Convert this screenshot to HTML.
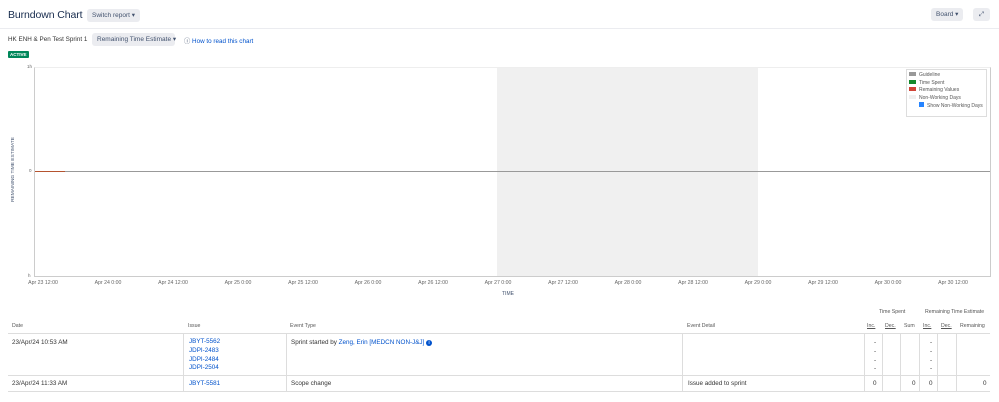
<!DOCTYPE html>
<html><head><meta charset="utf-8"><style>
*{box-sizing:border-box;margin:0;padding:0}
body{width:999px;height:402px;background:#fff;font-family:"Liberation Sans",sans-serif;color:#172b4d;position:relative;overflow:hidden}
.a{position:absolute;white-space:nowrap}
.btn{background:#ebecf0;border-radius:3px;font-size:6.5px;color:#42526e;padding:0 5px;height:13px;line-height:13px}
.lnk{color:#0052cc}
.s{font-size:6.3px;color:#333}
.x{font-size:5.2px;color:#666;transform:translateX(-50%)}
.h{font-size:5.2px;color:#555}
</style></head><body>
<div class="a" style="left:8px;top:9px;font-size:10.5px;color:#172b4d;letter-spacing:-0.1px">Burndown Chart</div>
<div class="a btn" style="left:87px;top:9px">Switch report ▾</div>
<div class="a btn" style="left:931px;top:8px">Board ▾</div>
<div class="a btn" style="left:973px;top:8px;width:17px;padding:0;text-align:center">⤢</div>
<div class="a" style="left:0;top:28px;width:999px;height:1px;background:#ebecf0"></div>
<div class="a" style="left:8px;top:36px;font-size:6.3px;color:#333">HK ENH &amp; Pen Test Sprint 1</div>
<div class="a btn" style="left:92px;top:33px;width:83px">Remaining Time Estimate ▾</div>
<div class="a" style="left:184px;top:36px;font-size:6.3px;color:#0052cc"><span style="color:#42526e">ⓘ</span> How to read this chart</div>
<div class="a" style="left:8px;top:51px;height:7px;line-height:7px;background:#00875a;color:#fff;font-size:4.5px;font-weight:bold;padding:0 2px;border-radius:1px">ACTIVE</div>
<div class="a" style="left:34px;top:67px;width:957px;height:210px;border:1px solid #ccc;border-top-color:#eee"></div>
<div class="a" style="left:497px;top:68px;width:261px;height:208px;background:#f0f0f0"></div>
<div class="a" style="left:35px;top:171px;width:955px;height:1px;background:#999"></div>
<div class="a" style="left:35px;top:171px;width:30px;height:1px;background:#b5532f"></div>
<div class="a" style="left:27px;top:64px;font-size:4.5px;color:#666">1h</div>
<div class="a" style="left:29px;top:168px;font-size:4.5px;color:#666">0</div>
<div class="a" style="left:28px;top:273px;font-size:4.5px;color:#666">h</div>
<div class="a" style="left:-19px;top:167px;font-size:4.8px;color:#42526e;transform:rotate(-90deg)">REMAINING TIME ESTIMATE</div>
<div class="a x" style="left:43px;top:280px">Apr 23 12:00</div>
<div class="a x" style="left:108px;top:280px">Apr 24 0:00</div>
<div class="a x" style="left:173px;top:280px">Apr 24 12:00</div>
<div class="a x" style="left:238px;top:280px">Apr 25 0:00</div>
<div class="a x" style="left:303px;top:280px">Apr 25 12:00</div>
<div class="a x" style="left:368px;top:280px">Apr 26 0:00</div>
<div class="a x" style="left:433px;top:280px">Apr 26 12:00</div>
<div class="a x" style="left:498px;top:280px">Apr 27 0:00</div>
<div class="a x" style="left:563px;top:280px">Apr 27 12:00</div>
<div class="a x" style="left:628px;top:280px">Apr 28 0:00</div>
<div class="a x" style="left:693px;top:280px">Apr 28 12:00</div>
<div class="a x" style="left:758px;top:280px">Apr 29 0:00</div>
<div class="a x" style="left:823px;top:280px">Apr 29 12:00</div>
<div class="a x" style="left:888px;top:280px">Apr 30 0:00</div>
<div class="a x" style="left:953px;top:280px">Apr 30 12:00</div>
<div class="a" style="left:502px;top:291px;font-size:5px;color:#42526e">TIME</div>
<div class="a" style="left:906px;top:69px;width:81px;height:48px;border:1px solid #ddd;background:#fff;font-size:5px;color:#555;line-height:7.5px;padding:2px 0 0 2px">
<div><span style="display:inline-block;width:7px;height:4px;background:#999;margin-right:3px"></span>Guideline</div>
<div><span style="display:inline-block;width:7px;height:4px;background:#14892c;margin-right:3px"></span>Time Spent</div>
<div><span style="display:inline-block;width:7px;height:4px;background:#d04437;margin-right:3px"></span>Remaining Values</div>
<div><span style="display:inline-block;width:7px;height:4px;background:#f0f0f0;margin-right:3px"></span>Non-Working Days</div>
<div style="padding-left:10px"><span style="display:inline-block;width:5px;height:5px;background:#2684ff;margin-right:3px"></span>Show Non-Working Days</div>
</div>
<div class="a h" style="left:879px;top:309px">Time Spent</div>
<div class="a h" style="left:925px;top:309px">Remaining Time Estimate</div>
<div class="a h" style="left:12px;top:323px">Date</div>
<div class="a h" style="left:188px;top:323px">Issue</div>
<div class="a h" style="left:290px;top:323px">Event Type</div>
<div class="a h" style="left:687px;top:323px">Event Detail</div>
<div class="a h" style="left:867px;top:323px;text-decoration:underline">Inc.</div>
<div class="a h" style="left:885px;top:323px;text-decoration:underline">Dec.</div>
<div class="a h" style="left:904px;top:323px">Sum</div>
<div class="a h" style="left:923px;top:323px;text-decoration:underline">Inc.</div>
<div class="a h" style="left:941px;top:323px;text-decoration:underline">Dec.</div>
<div class="a h" style="left:960px;top:323px">Remaining</div>
<div class="a" style="left:8px;top:333px;width:982px;height:1px;background:#ddd"></div>
<div class="a" style="left:8px;top:375px;width:982px;height:1px;background:#ddd"></div>
<div class="a" style="left:8px;top:391px;width:982px;height:1px;background:#ddd"></div>
<div class="a" style="left:183px;top:334px;width:1px;height:57px;background:#ddd"></div>
<div class="a" style="left:286px;top:334px;width:1px;height:57px;background:#ddd"></div>
<div class="a" style="left:682px;top:334px;width:1px;height:57px;background:#ddd"></div>
<div class="a" style="left:864px;top:334px;width:1px;height:57px;background:#ddd"></div>
<div class="a" style="left:882px;top:334px;width:1px;height:57px;background:#ddd"></div>
<div class="a" style="left:900px;top:334px;width:1px;height:57px;background:#ddd"></div>
<div class="a" style="left:919px;top:334px;width:1px;height:57px;background:#ddd"></div>
<div class="a" style="left:937px;top:334px;width:1px;height:57px;background:#ddd"></div>
<div class="a" style="left:956px;top:334px;width:1px;height:57px;background:#ddd"></div>
<div class="a s" style="left:12px;top:339px">23/Apr/24 10:53 AM</div>
<div class="a s lnk" style="left:189px;top:338px;line-height:8.8px;color:#0052cc">JBYT-5562<br>JDPI-2483<br>JDPI-2484<br>JDPI-2504</div>
<div class="a s" style="left:291px;top:339px">Sprint started by <span class="lnk">Zeng, Erin [MEDCN NON-J&amp;J]</span> <span style="display:inline-block;width:6px;height:6px;border-radius:50%;background:#0052cc;color:#fff;font-size:5px;line-height:6px;text-align:center">i</span></div>
<div class="a s" style="left:874px;top:339px;line-height:8.8px">-<br>-<br>-<br>-</div>
<div class="a s" style="left:930px;top:339px;line-height:8.8px">-<br>-<br>-<br>-</div>
<div class="a s" style="left:12px;top:380px">23/Apr/24 11:33 AM</div>
<div class="a s lnk" style="left:189px;top:380px;color:#0052cc">JBYT-5581</div>
<div class="a s" style="left:291px;top:380px">Scope change</div>
<div class="a s" style="left:688px;top:380px">Issue added to sprint</div>
<div class="a s" style="left:873px;top:380px">0</div>
<div class="a s" style="left:912px;top:380px">0</div>
<div class="a s" style="left:929px;top:380px">0</div>
<div class="a s" style="left:983px;top:380px">0</div>
</body></html>
